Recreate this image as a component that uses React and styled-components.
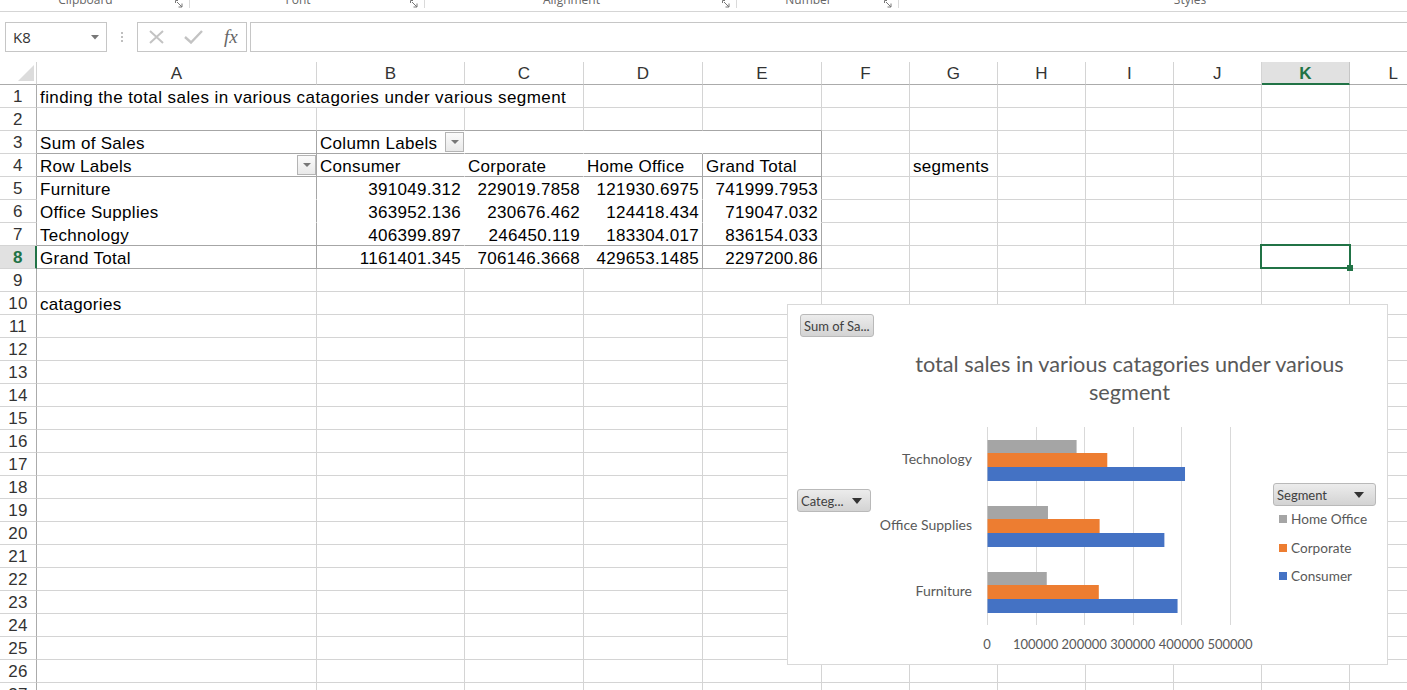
import React from 'react';
import styled, { createGlobalStyle } from 'styled-components';

const GRID = '#d4d4d4';
const PIVOT = '#a6a6a6';
const GREEN = '#217346';
const CHART_TEXT = '#595959';

const GlobalStyle = createGlobalStyle`
  html, body {
    margin: 0;
    padding: 0;
    background: #fff;
    overflow: hidden;
  }
  body {
    font-family: "Liberation Sans", Arial, sans-serif;
  }
`;

const Page = styled.div`
  position: relative;
  width: 1407px;
  height: 690px;
  overflow: hidden;
  background: #fff;
`;

// ---------- ribbon strip ----------
const Ribbon = styled.div`
  display: flex;
  height: 11px;
  border-bottom: 1px solid #d5d5d5;
  overflow: hidden;
`;

const RibbonGroup = styled.div`
  flex: 0 0 ${p => p.$w}px;
  height: 8px;
  display: flex;
  align-items: flex-start;
  border-right: ${p => (p.$last ? 'none' : '1px solid #dadada')};
`;

const GroupLabel = styled.div`
  flex: 1;
  text-align: center;
  margin-top: -8px;
  font-family: "Open Sans", sans-serif;
  font-size: 12px;
  line-height: 16px;
  color: #666;
`;

const Launcher = styled.svg`
  flex: 0 0 8px;
  height: 8px;
  margin: 0 6px 0 4px;
`;

// ---------- formula bar ----------
const FormulaBar = styled.div`
  display: flex;
  align-items: center;
  height: 30px;
  margin: 10px 0;
  padding-left: 5px;
`;

const NameBox = styled.div`
  box-sizing: border-box;
  width: 102px;
  height: 30px;
  border: 1px solid #c6c6c6;
  display: flex;
  align-items: center;
  justify-content: space-between;
  padding: 0 7px 0 7px;
  font-family: "Open Sans", sans-serif;
  font-size: 15px;
  color: #333;
`;

const Grip = styled.svg`
  width: 4px;
  height: 12px;
  margin: 0 13px;
`;

const FxBox = styled.div`
  box-sizing: border-box;
  width: 110px;
  height: 30px;
  border: 1px solid #c6c6c6;
  display: flex;
  align-items: center;
  padding-left: 11px;
  gap: 20px;
`;

const Fx = styled.span`
  font-family: "Liberation Serif", serif;
  font-style: italic;
  font-size: 19px;
  color: #666;
  margin-left: 1px;
`;

const FormulaInput = styled.div`
  box-sizing: border-box;
  flex: 1;
  height: 30px;
  margin-left: 3px;
  border: 1px solid #c6c6c6;
  border-right: none;
`;

// ---------- sheet ----------
const COLS = [
  { key: 'A', w: 280 },
  { key: 'B', w: 148 },
  { key: 'C', w: 119 },
  { key: 'D', w: 119 },
  { key: 'E', w: 119 },
  { key: 'F', w: 88 },
  { key: 'G', w: 88 },
  { key: 'H', w: 88 },
  { key: 'I', w: 88 },
  { key: 'J', w: 88 },
  { key: 'K', w: 88 },
  { key: 'L', w: 88 },
];

const Sheet = styled.div`
  display: grid;
  grid-template-columns: 37px 280px 148px 119px 119px 119px repeat(7, 88px);
  grid-auto-rows: 23px;
  font-size: 17px;
  letter-spacing: 0.3px;
`;

const Corner = styled.div`
  box-sizing: border-box;
  border-right: 1px solid ${GRID};
  border-bottom: 1px solid #ababab;
  display: flex;
  align-items: flex-end;
  justify-content: flex-end;
  padding: 0 2px 3px 0;
`;

const ColHead = styled.div`
  box-sizing: border-box;
  display: flex;
  align-items: center;
  justify-content: center;
  padding-top: 2px;
  border-right: 1px solid ${p => (p.$active ? '#c6c6c6' : GRID)};
  border-bottom: ${p => (p.$active ? `2px solid ${GREEN}` : '1px solid #ababab')};
  background: ${p => (p.$active ? '#e1e1e1' : '#fff')};
  color: ${p => (p.$active ? GREEN : '#333')};
  font-weight: ${p => (p.$active ? 700 : 400)};
`;

const RowHead = styled.div`
  box-sizing: border-box;
  display: flex;
  align-items: center;
  justify-content: center;
  padding-top: 2px;
  border-bottom: 1px solid ${GRID};
  border-right: ${p => (p.$active ? `2px solid ${GREEN}` : '1px solid #ababab')};
  background: ${p => (p.$active ? '#e1e1e1' : '#fff')};
  color: ${p => (p.$active ? GREEN : '#333')};
  font-weight: ${p => (p.$active ? 700 : 400)};
  padding-left: ${p => (p.$active ? '1px' : '0')};
`;

const Cell = styled.div`
  position: relative;
  box-sizing: border-box;
  display: flex;
  align-items: center;
  justify-content: ${p => (p.$align === 'right' ? 'flex-end' : 'space-between')};
  padding: 0 ${p => (p.$flush ? 0 : 3)}px 0 3px;
  grid-column: ${p => (p.$span ? `span ${p.$span}` : 'auto')};
  border-right: 1px solid ${p => p.$br || GRID};
  border-bottom: 1px solid ${p => p.$bb || GRID};
  background: #fff;
  color: #000;
  line-height: 22px;
  white-space: nowrap;
  letter-spacing: ${p => (p.$wide ? '0.42px' : '0.3px')};
`;

const CellText = styled.span`
  padding-top: 3px;
`;

const PivotDrop = styled.div`
  box-sizing: border-box;
  width: 19px;
  height: 20px;
  border: 1px solid #b4b4b4;
  background: linear-gradient(#fbfbfb, #e9e9e9);
  display: flex;
  align-items: center;
  justify-content: center;
  &::after {
    content: '';
    border-left: 4px solid transparent;
    border-right: 4px solid transparent;
    border-top: 4px solid #777;
  }
`;

const Selection = styled.div`
  position: absolute;
  top: -2px;
  left: -2px;
  right: -2px;
  bottom: -1px;
  border: 2px solid ${GREEN};
  z-index: 3;
  &::after {
    content: '';
    position: absolute;
    right: -4px;
    bottom: -4px;
    width: 6px;
    height: 6px;
    background: ${GREEN};
  }
`;

// ---------- chart ----------
const Chart = styled.div`
  position: absolute;
  left: 787px;
  top: 304px;
  width: 601px;
  height: 361px;
  box-sizing: border-box;
  border: 1px solid #d9d9d9;
  background: #fff;
  z-index: 4;
  display: flex;
  flex-direction: column;
  font-family: Lato, "Open Sans", sans-serif;
`;

const FieldButton = styled.div`
  box-sizing: border-box;
  width: ${p => p.$w}px;
  height: ${p => p.$h || 23}px;
  margin: ${p => p.$m};
  border: 1px solid #b9b9b9;
  border-radius: 3px;
  background: linear-gradient(#ececec, #d3d3d3);
  display: flex;
  align-items: center;
  justify-content: space-between;
  padding: 0 ${p => p.$pr || 4}px 0 3px;
  font-size: 13px;
  color: #404040;
  white-space: nowrap;
  overflow: hidden;
`;

const DownTri = styled.span`
  width: 0;
  height: 0;
  border-left: 5px solid transparent;
  border-right: 5px solid transparent;
  border-top: 6px solid #333;
`;

const Title = styled.div`
  margin-top: 13px;
  padding-left: 84px;
  text-align: center;
  font-size: 21.7px;
  line-height: 28px;
  color: ${CHART_TEXT};
  white-space: nowrap;
`;

const ChartBody = styled.div`
  flex: 1;
  display: flex;
`;

const CategSlot = styled.div`
  flex: 0 0 87px;
`;

const Plot = styled.svg`
  flex: 0 0 387px;
  height: 257px;
  font-family: Lato, "Open Sans", sans-serif;
`;

const Legend = styled.div`
  margin-left: 11px;
  padding-top: 77px;
  display: flex;
  flex-direction: column;
`;

const LegendItem = styled.div`
  display: flex;
  align-items: center;
  gap: 4px;
  height: 28.5px;
  margin-top: ${p => (p.$first ? '-1px' : '0')};
  padding-left: 6px;
  font-size: 13.6px;
  color: ${CHART_TEXT};
`;

const Swatch = styled.span`
  width: 8px;
  height: 8px;
  background: ${p => p.$c};
`;

const SERIES = [
  { name: 'Home Office', color: '#a5a5a5' },
  { name: 'Corporate', color: '#ed7d31' },
  { name: 'Consumer', color: '#4472c4' },
];

const DATA = [
  { cat: 'Technology', v: [183304.017, 246450.119, 406399.897] },
  { cat: 'Office Supplies', v: [124418.434, 230676.462, 363952.136] },
  { cat: 'Furniture', v: [121930.6975, 229019.7858, 391049.312] },
];

const X0 = 112;
const SCALE = 243 / 500000;

const BarPlot = () => (
  <Plot viewBox="0 0 387 257">
    {[0, 1, 2, 3, 4, 5].map(i => {
      const x = Math.round(X0 + i * 100000 * SCALE) + 0.5;
      return <line key={i} x1={x} x2={x} y1={21} y2={219} stroke="#d9d9d9" strokeWidth="1" />;
    })}
    {DATA.map((d, j) => {
      const top = 34 + j * 66;
      const ys = [top, top + 13, top + 27];
      const hs = [13, 14, 14];
      return (
        <g key={d.cat}>
          {d.v.map((v, k) => (
            <rect key={k} x={X0 + 0.5} y={ys[k]} width={v * SCALE} height={hs[k]} fill={SERIES[k].color} />
          ))}
          <text x={97} y={top + 18} textAnchor="end" dominantBaseline="central" fontSize="14" fill={CHART_TEXT}>
            {d.cat}
          </text>
        </g>
      );
    })}
    {[0, 100000, 200000, 300000, 400000, 500000].map(v => (
      <text
        key={v}
        x={X0 + v * SCALE}
        y={238}
        textAnchor="middle"
        dominantBaseline="central"
        fontSize="13"
        fill={CHART_TEXT}
      >
        {v}
      </text>
    ))}
  </Plot>
);

// ---------- cell contents ----------
const numbers = {
  5: ['Furniture', '391049.312', '229019.7858', '121930.6975', '741999.7953'],
  6: ['Office Supplies', '363952.136', '230676.462', '124418.434', '719047.032'],
  7: ['Technology', '406399.897', '246450.119', '183304.017', '836154.033'],
  8: ['Grand Total', '1161401.345', '706146.3668', '429653.1485', '2297200.86'],
};

const pivotBorders = (r, c) => {
  if (c > 4 || r < 2 || r > 8) return {};
  const bb = [2, 3, 4, 7, 8].includes(r) ? PIVOT : '#fff';
  if (r === 2) return { bb };
  let br = '#fff';
  if (c === 0 || c === 4) br = PIVOT;
  if (c === 3 && r >= 4) br = PIVOT;
  return { bb, br };
};

const renderCell = (r, c) => {
  const key = `${r}-${c}`;
  const b = pivotBorders(r, c);
  const common = { key, $bb: b.bb, $br: b.br };

  if (r === 1) {
    if (c === 0)
      return (
        <Cell {...common} $span={3} $wide>
          <CellText>finding the total sales in various catagories under various segment</CellText>
        </Cell>
      );
    if (c < 3) return null;
  }
  if (r === 3 && c === 0)
    return (
      <Cell {...common}>
        <CellText>Sum of Sales</CellText>
      </Cell>
    );
  if (r === 3 && c === 1)
    return (
      <Cell {...common} $flush>
        <CellText>Column Labels</CellText>
        <PivotDrop />
      </Cell>
    );
  if (r === 4) {
    if (c === 0)
      return (
        <Cell {...common} $flush>
          <CellText>Row Labels</CellText>
          <PivotDrop />
        </Cell>
      );
    const heads = { 1: 'Consumer', 2: 'Corporate', 3: 'Home Office', 4: 'Grand Total', 6: 'segments' };
    if (heads[c])
      return (
        <Cell {...common}>
          <CellText>{heads[c]}</CellText>
        </Cell>
      );
  }
  if (numbers[r] && c <= 4) {
    return (
      <Cell {...common} $align={c === 0 ? 'left' : 'right'}>
        <CellText>{numbers[r][c]}</CellText>
      </Cell>
    );
  }
  if (r === 8 && c === 10)
    return (
      <Cell {...common}>
        <Selection />
      </Cell>
    );
  if (r === 10 && c === 0)
    return (
      <Cell {...common}>
        <CellText>catagories</CellText>
      </Cell>
    );
  return <Cell {...common} />;
};

const RIBBON = [
  { label: 'Clipboard', w: 189 },
  { label: 'Font', w: 234 },
  { label: 'Alignment', w: 311 },
  { label: 'Number', w: 161 },
  { label: 'Styles', w: 582, last: true },
];

const App = () => {
  const rows = Array.from({ length: 27 }, (_, i) => i + 1);
  return (
    <Page>
      <GlobalStyle />
      <Ribbon>
        {RIBBON.map(g => (
          <RibbonGroup key={g.label} $w={g.w} $last={g.last}>
            <GroupLabel>{g.label}</GroupLabel>
            {!g.last && (
              <Launcher viewBox="0 0 8 8">
                <path d="M0.5 3V0.5H3" fill="none" stroke="#777" />
                <path d="M2 2L7 7M7 3.5V7H3.5" fill="none" stroke="#777" />
              </Launcher>
            )}
          </RibbonGroup>
        ))}
      </Ribbon>

      <FormulaBar>
        <NameBox>
          K8
          <svg width="8" height="5" viewBox="0 0 8 5">
            <path d="M0 0H8L4 4.5Z" fill="#777" />
          </svg>
        </NameBox>
        <Grip viewBox="0 0 4 12">
          <circle cx="2" cy="2" r="1" fill="#aaa" />
          <circle cx="2" cy="6" r="1" fill="#aaa" />
          <circle cx="2" cy="10" r="1" fill="#aaa" />
        </Grip>
        <FxBox>
          <svg width="15" height="14" viewBox="0 0 15 14">
            <path d="M1 1L14 13M14 1L1 13" stroke="#c3c3c3" strokeWidth="2" fill="none" />
          </svg>
          <svg width="19" height="14" viewBox="0 0 19 14">
            <path d="M1 7L7 12.5L18 1" stroke="#c3c3c3" strokeWidth="2.4" fill="none" />
          </svg>
          <Fx>fx</Fx>
        </FxBox>
        <FormulaInput />
      </FormulaBar>

      <Sheet>
        <Corner>
          <svg width="16" height="16" viewBox="0 0 16 16">
            <path d="M16 0V16H0Z" fill="#dcdcdc" />
          </svg>
        </Corner>
        {COLS.map(c => (
          <ColHead key={c.key} $active={c.key === 'K'}>
            {c.key}
          </ColHead>
        ))}
        {rows.map(r => (
          <React.Fragment key={r}>
            <RowHead $active={r === 8}>{r}</RowHead>
            {COLS.map((_, c) => renderCell(r, c))}
          </React.Fragment>
        ))}
      </Sheet>

      <Chart>
        <FieldButton $w={74} $m="9px 0 0 12px">
          Sum of Sa...
        </FieldButton>
        <Title>
          total sales in various catagories under various
          <br />
          segment
        </Title>
        <ChartBody>
          <CategSlot>
            <FieldButton $w={74} $m="83px 0 0 9px" $pr={8}>
              Categ...
              <DownTri />
            </FieldButton>
          </CategSlot>
          <BarPlot />
          <Legend>
            <FieldButton $w={103} $m="0" $pr={11}>
              Segment
              <DownTri />
            </FieldButton>
            {SERIES.map((s, i) => (
              <LegendItem key={s.name} $first={i === 0}>
                <Swatch $c={s.color} />
                {s.name}
              </LegendItem>
            ))}
          </Legend>
        </ChartBody>
      </Chart>
    </Page>
  );
};

export default App;
